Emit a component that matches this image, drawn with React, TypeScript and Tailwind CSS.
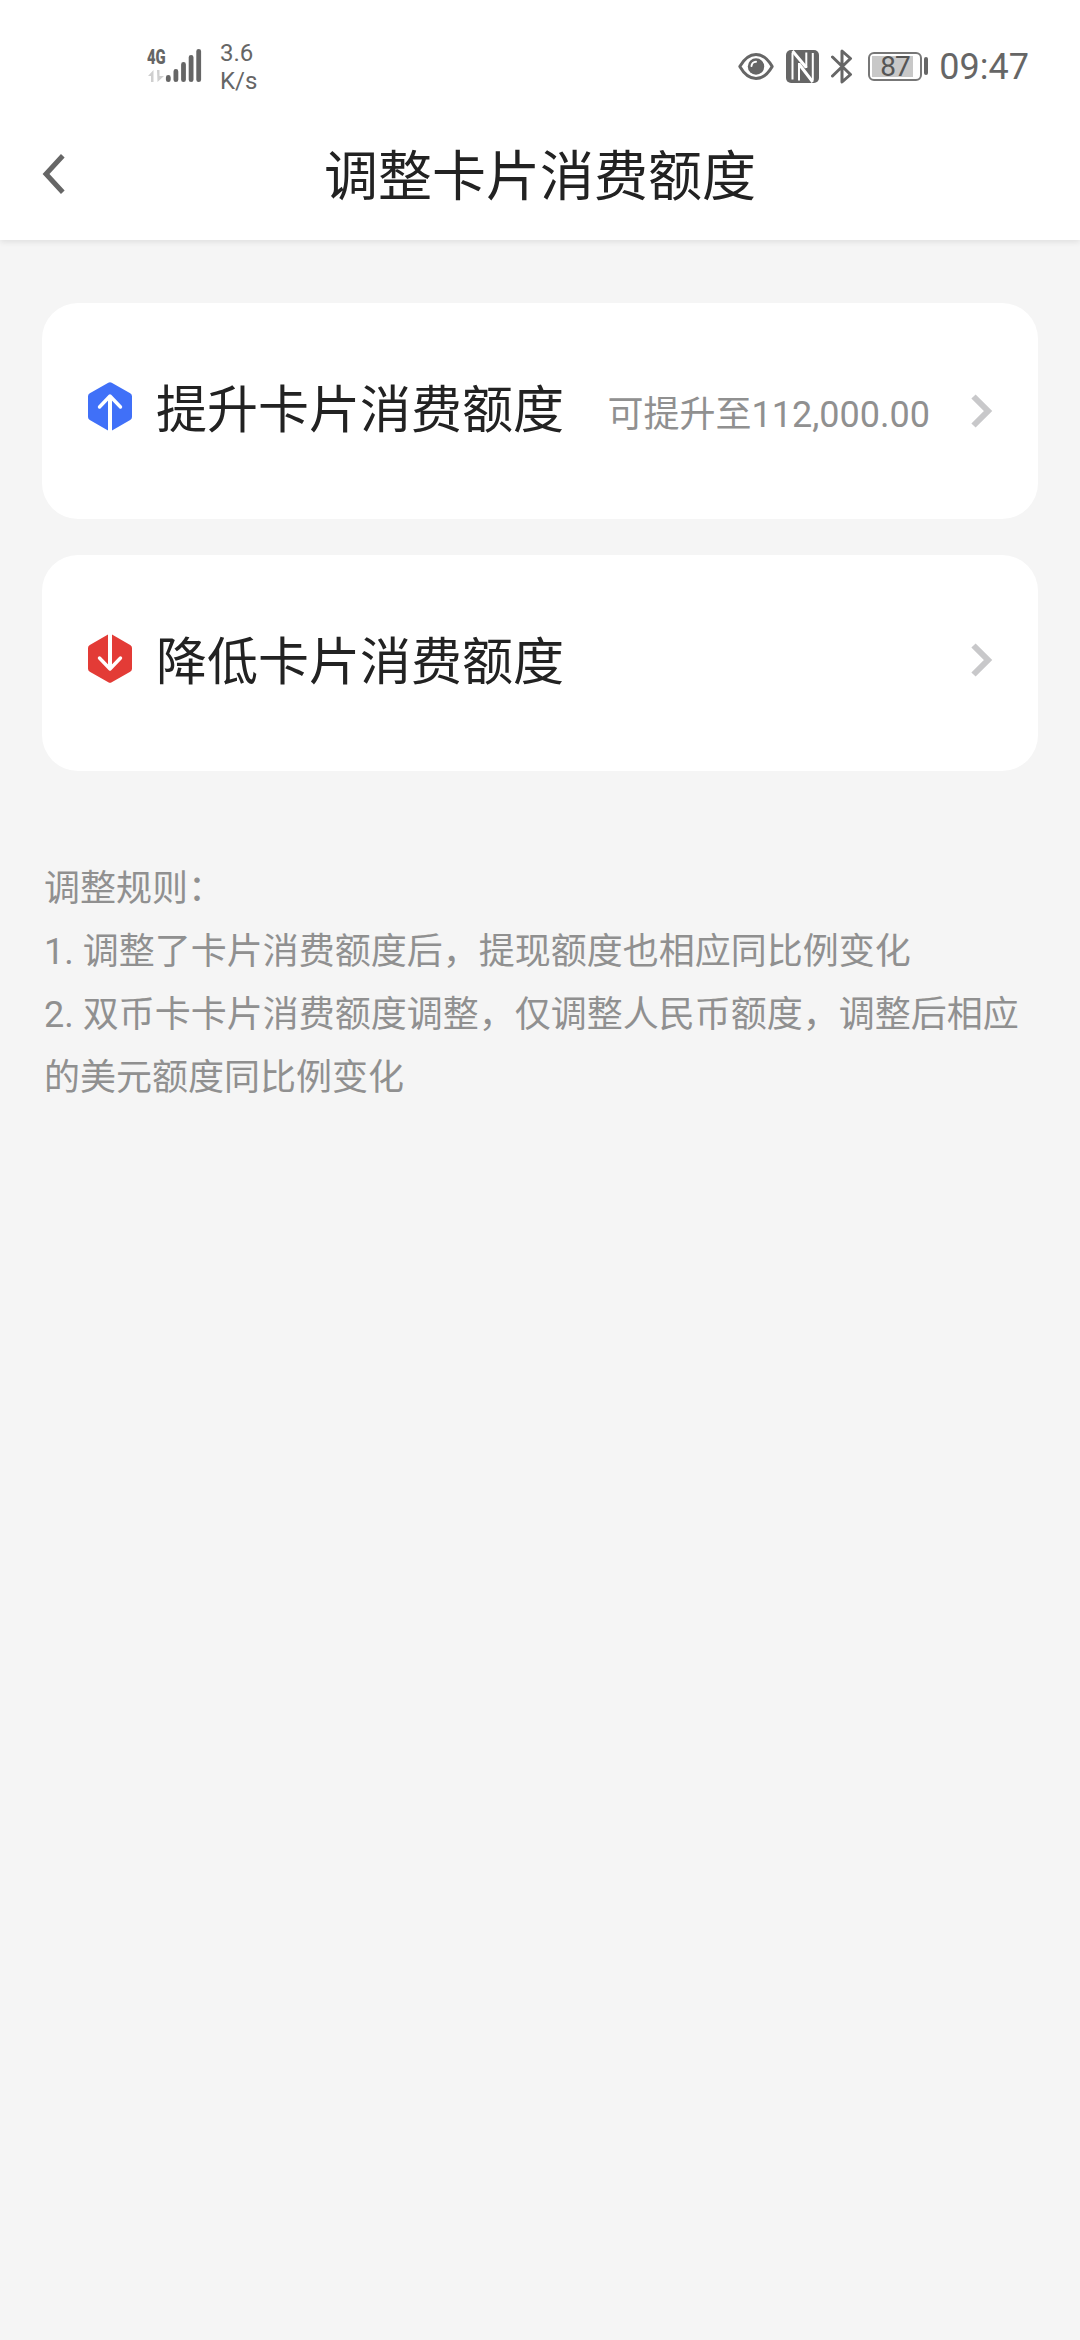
import React from "react";

function StatusBar() {
  return (
    <div className="flex h-[132px] shrink-0 items-center justify-between pl-[147px] pr-[51px] text-[#666666]">
      <div className="flex items-center">
        <div className="relative h-[36px] w-[56px]">
          <span className="absolute left-0 top-[-1px] origin-left scale-x-[0.74] text-[20px] font-black leading-[20px]">4G</span>
          <svg className="absolute left-0 top-0" width="56" height="36" viewBox="147 48 56 36">
            <path d="M148 76 L153.500 70 V82 H151 V76 Z M157 70 H159.500 V76 H164 L157.500 82 Z" fill="#cfcfcf" />
            <g stroke="#666666" strokeWidth="4.800" strokeLinecap="round">
              <path d="M168.300 77.500V79.700M175.900 71.500V79.700M183.500 64.400V79.700M191.100 57.300V79.700M198.700 51.300V79.700" />
            </g>
          </svg>
        </div>
        <div className="ml-[17px] mt-[2px] text-[24px] leading-[28px]">
          <div>3.6</div>
          <div>K/s</div>
        </div>
      </div>
      <div className="flex items-center">
        <svg width="36" height="36" viewBox="739 48 36 36">
          <path d="M740.800 66.500C750 50.500 764 50.500 773.200 66.500C764 82.500 750 82.500 740.800 66.500Z" fill="none" stroke="#666666" strokeWidth="3" strokeLinejoin="round" />
          <circle cx="757" cy="66.500" r="8.200" fill="#666666" />
          <path d="M752.500 66A4.600 4.600 0 0 1 757 61.700" fill="none" stroke="#fff" strokeWidth="2" strokeLinecap="round" />
        </svg>
        <svg className="ml-3" width="34" height="36" viewBox="787 48 34 36">
          <rect x="787" y="50" width="33" height="33" rx="5" fill="#666666" />
          <path d="M793.500 79.500V53M807.300 68V52.500M800 80.500V63M813.800 80V53" fill="none" stroke="#fff" strokeWidth="2" />
          <path d="M793.500 51L807.300 67.500M800 64L813.800 82" fill="none" stroke="#fff" strokeWidth="3" />
        </svg>
        <svg className="ml-[11px]" width="22" height="36" viewBox="832 48 22 36">
          <path d="M833.500 57L851.500 74.500L843 82V51L851.500 58.500L833.500 76" fill="none" stroke="#666666" strokeWidth="3" strokeLinejoin="round" strokeLinecap="round" />
        </svg>
        <div className="ml-[15px] flex items-center">
          <div className="relative flex h-[29px] w-[54px] items-center rounded-[6px] border-2 border-[#777777] pl-[2px]">
            <div className="h-[21px] w-[41px] bg-[#c8c8c8]" />
            <span className="absolute left-[10px] top-[-2px] text-[28px] leading-[29px] tracking-[-1px] text-[#555555]">87</span>
          </div>
          <div className="ml-[2px] h-[18px] w-[4px] rounded-[2px] bg-[#666666]" />
        </div>
        <span className="ml-[11px] mt-[2px] text-[36px] leading-[36px]">09:47</span>
      </div>
    </div>
  );
}

function Header() {
  return (
    <header className="grid h-[108px] shrink-0 grid-cols-[156px_1fr_156px] items-start bg-white">
      <svg className="ml-[42px] mt-[20px]" width="24" height="44" viewBox="0 0 24 44">
        <path d="M20.800 3.700L4 22L20.800 40.300" fill="none" stroke="#666666" strokeWidth="5" />
      </svg>
      <h1 className="mt-[6px] text-center text-[54px] leading-[80px] text-[#222222]">调整卡片消费额度</h1>
    </header>
  );
}

function DirectionIcon({ down = false }: { down?: boolean }) {
  return (
    <svg className={down ? "rotate-180" : ""} width="44" height="49" viewBox="0 0 44 49">
      <path
        d="M20.300 .8Q22 -.2 23.700 .8L42.200 11.200Q44 12.300 44 14.300V35Q44 37 42.200 38L24 48.500V18H20V48.500L1.800 38Q0 37 0 35V14.300Q0 12.300 1.800 11.200Z"
        fill={down ? "#e33b36" : "#4070f8"}
      />
      <path d="M11.500 25L22 14L32.500 25" fill="none" stroke="#fff" strokeWidth="3.400" strokeLinecap="round" strokeLinejoin="round" />
      <path d="M22 15V49" stroke="#fff" strokeWidth="3.600" />
    </svg>
  );
}

function LimitRow({ label, note, down = false }: { label: string; note?: string; down?: boolean }) {
  return (
    <button className="flex h-[216px] w-full items-center rounded-[36px] bg-white pl-[46px] pr-[45px] text-left">
      <span className="-mt-[10px]">
        <DirectionIcon down={down} />
      </span>
      <span className="-mt-px ml-[24px] text-[51px] leading-[76px] text-[#222222]">{label}</span>
      <span className="ml-auto mt-[7px] text-[36px] leading-[54px] text-[#909090]">{note}</span>
      <svg className={down ? "-mt-[6px] ml-[41px]" : "ml-[41px]"} width="22" height="34" viewBox="0 0 22 34">
        <path d="M2.500 2.500L17 17L2.500 31.500" fill="none" stroke="#c8c8ca" strokeWidth="6" />
      </svg>
    </button>
  );
}

export default function App() {
  return (
    <div className="flex h-[2340px] w-[1080px] flex-col bg-[#f5f5f5] font-['Roboto','Noto_Sans_CJK_SC',sans-serif]">
      <div className="relative z-10 bg-white shadow-[0_2px_6px_rgba(0,0,0,0.09)]">
        <StatusBar />
        <Header />
      </div>
      <main className="px-[42px] pt-[63px]">
        <div className="flex flex-col gap-9">
          <LimitRow label="提升卡片消费额度" note="可提升至112,000.00" />
          <LimitRow label="降低卡片消费额度" down />
        </div>
        <div className="-mr-[10px] ml-[2px] mt-[87px] text-[36px] leading-[63px] text-[#909090]">
          <p>调整规则：</p>
          <p>1. 调整了卡片消费额度后，提现额度也相应同比例变化</p>
          <p>2. 双币卡卡片消费额度调整，仅调整人民币额度，调整后相应的美元额度同比例变化</p>
        </div>
      </main>
    </div>
  );
}
